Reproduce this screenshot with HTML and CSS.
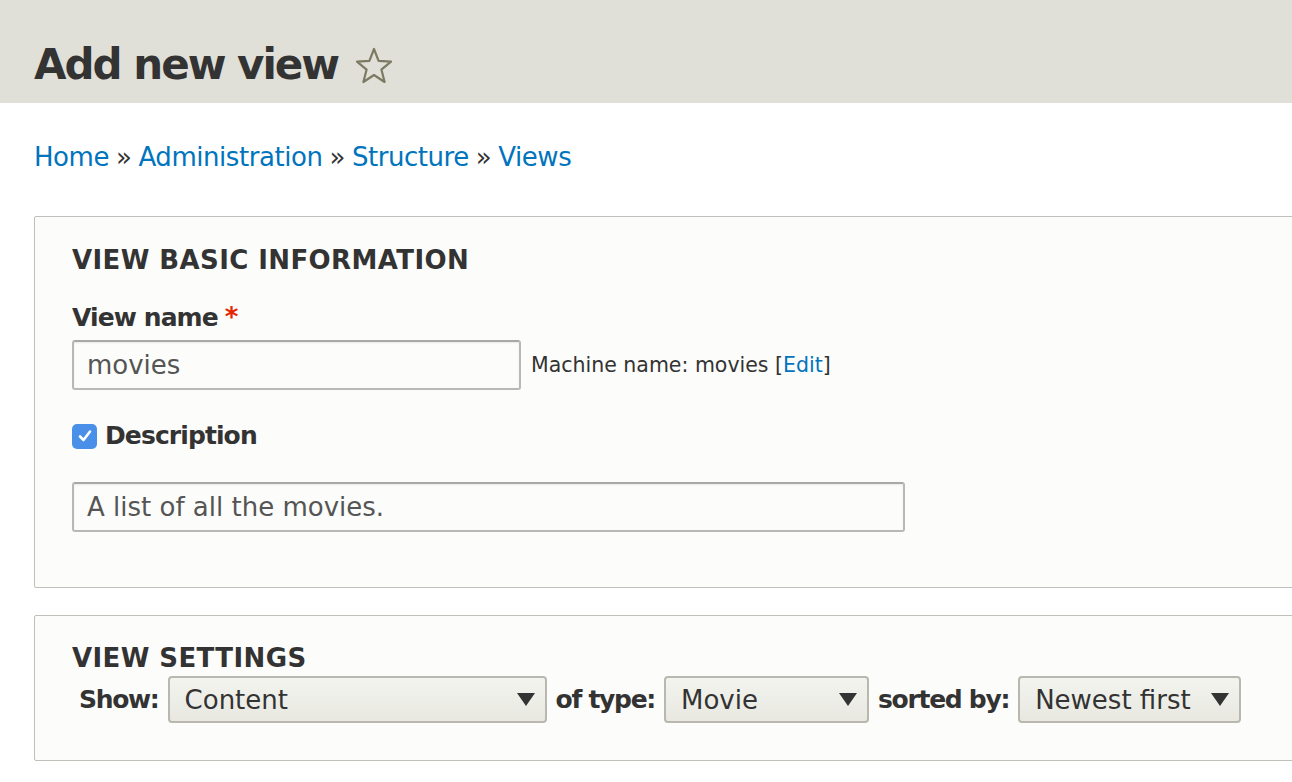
FILE: index.html
```html
<!DOCTYPE html>
<html lang="en">
<head>
<meta charset="utf-8">
<title>Add new view</title>
<link rel="stylesheet" href="styles.css">
</head>
<body>
<header class="page-header">
  <h1 class="page-title">Add new view</h1>
  <svg class="star" width="38" height="38" viewBox="0 0 38 38" aria-hidden="true">
    <path d="M19 2 L23.6 13.8 L36 14.6 L26.4 22.6 L29.6 35 L19 28 L8.4 35 L11.6 22.6 L2 14.6 L14.4 13.8 Z" fill="none" stroke="#7b7a62" stroke-width="2.2" stroke-linejoin="round"/>
  </svg>
</header>
<main class="content">
  <nav class="breadcrumb">
    <a href="#">Home</a><span class="sep">»</span><a href="#">Administration</a><span class="sep">»</span><a href="#">Structure</a><span class="sep">»</span><a href="#">Views</a>
  </nav>

  <section class="panel panel-basic">
    <h2 class="panel-title">View basic information</h2>
    <div class="field">
      <label class="field-label">View name<span class="req">*</span></label>
      <div class="field-row">
        <div class="text-input name-input">movies</div>
        <span class="machine">Machine name: movies [<a href="#">Edit</a>]</span>
      </div>
    </div>
    <div class="check-field">
      <span class="checkbox"><svg width="18" height="18" viewBox="0 0 18 18"><path d="M4 9.5 L7.5 13 L14 4.5" fill="none" stroke="#fff" stroke-width="2.6" stroke-linecap="round" stroke-linejoin="round"/></svg></span>
      <label class="field-label">Description</label>
    </div>
    <div class="text-input desc-input">A list of all the movies.</div>
  </section>

  <section class="panel panel-settings">
    <h2 class="panel-title">View settings</h2>
    <div class="settings-row">
      <span class="inline-label">Show:</span>
      <div class="select select-show"><span>Content</span><i class="arrow"></i></div>
      <span class="inline-label">of type:</span>
      <div class="select select-type"><span>Movie</span><i class="arrow"></i></div>
      <span class="inline-label">sorted by:</span>
      <div class="select select-sort"><span>Newest first</span><i class="arrow"></i></div>
    </div>
  </section>
</main>
</body>
</html>
```

FILE: styles.css
```css
* { box-sizing: border-box; }
html, body { margin: 0; padding: 0; }
body {
  background: #fff;
  color: #333;
  font-family: "DejaVu Sans", "Liberation Sans", sans-serif;
  font-size: 26px;
  overflow: hidden;
}
a { color: #0074bd; text-decoration: none; }

.page-header {
  background: #e0e0d8;
  height: 103px;
  padding: 26px 0 0 34px;
  display: flex;
  align-items: center;
  gap: 17px;
}
.page-title {
  margin: 0;
  font-size: 42px;
  letter-spacing: -2px;
  font-weight: bold;
  color: #333;
  line-height: 52px;
}
.star { display: block; margin-top: 2px; }

.content { padding: 0 0 0 34px; }

.breadcrumb {
  margin-top: 37px;
  font-size: 26px;
  letter-spacing: -0.45px;
  line-height: 34px;
  display: flex;
}
.breadcrumb .sep { color: #333; margin: 0 7px; }

.panel {
  background: #fcfcfa;
  border: 1px solid #c0c0bb;
  border-radius: 2px;
  margin-right: -20px;
  padding: 0 0 0 37px;
}
.panel-basic { margin-top: 42px; height: 372px; padding-top: 26px; }
.panel-settings { margin-top: 27px; height: 146px; padding-top: 25px; }

.panel-title {
  margin: 0;
  font-size: 26px;
  line-height: 34px;
  font-weight: bold;
  text-transform: uppercase;
  letter-spacing: 0.4px;
  color: #333;
}

.field { margin-top: 24px; }
.field-label {
  font-weight: bold;
  font-size: 25px;
  letter-spacing: -0.9px;
  line-height: 32px;
  color: #333;
}
.req { color: #e62600; margin-left: 7px; font-size: 26px; }
.field-row { display: flex; align-items: center; margin-top: 6px; gap: 10px; }

.text-input {
  height: 50px;
  border: 2px solid #b8b8b8;
  border-top-color: #a8a8a8;
  border-radius: 3px;
  background: #fcfcfa;
  box-shadow: inset 0 1px 2px rgba(0,0,0,0.08);
  font-size: 26px;
  line-height: 46px;
  padding: 0 13px;
  color: #555;
}
.name-input { width: 449px; }
.desc-input { width: 833px; margin-top: 30px; }
.machine { font-size: 20.5px; color: #333; }

.check-field { display: flex; align-items: center; gap: 8px; margin-top: 30px; }
.checkbox {
  width: 25px; height: 25px;
  border-radius: 5px;
  background: #4a90e8;
  display: flex; align-items: center; justify-content: center;
}
.checkbox svg { display: block; }

.settings-row { display: flex; align-items: center; gap: 9px; margin-top: 1px; margin-left: 7px; }
.inline-label {
  font-weight: bold;
  font-size: 25px;
  letter-spacing: -1.3px;
  color: #333;
}
.select {
  height: 47px;
  border: 2px solid #b8b8b0;
  border-radius: 4px;
  background: linear-gradient(#f4f4ef, #e8e8e1);
  display: flex; align-items: center; justify-content: space-between;
  padding: 0 10px 0 15px;
  font-size: 26px;
  color: #333;
}
.select-show { width: 379px; }
.select-type { width: 205px; }
.select-sort { width: 223px; }
.arrow {
  width: 0; height: 0;
  border-left: 9px solid transparent;
  border-right: 9px solid transparent;
  border-top: 13px solid #333;
}
```
